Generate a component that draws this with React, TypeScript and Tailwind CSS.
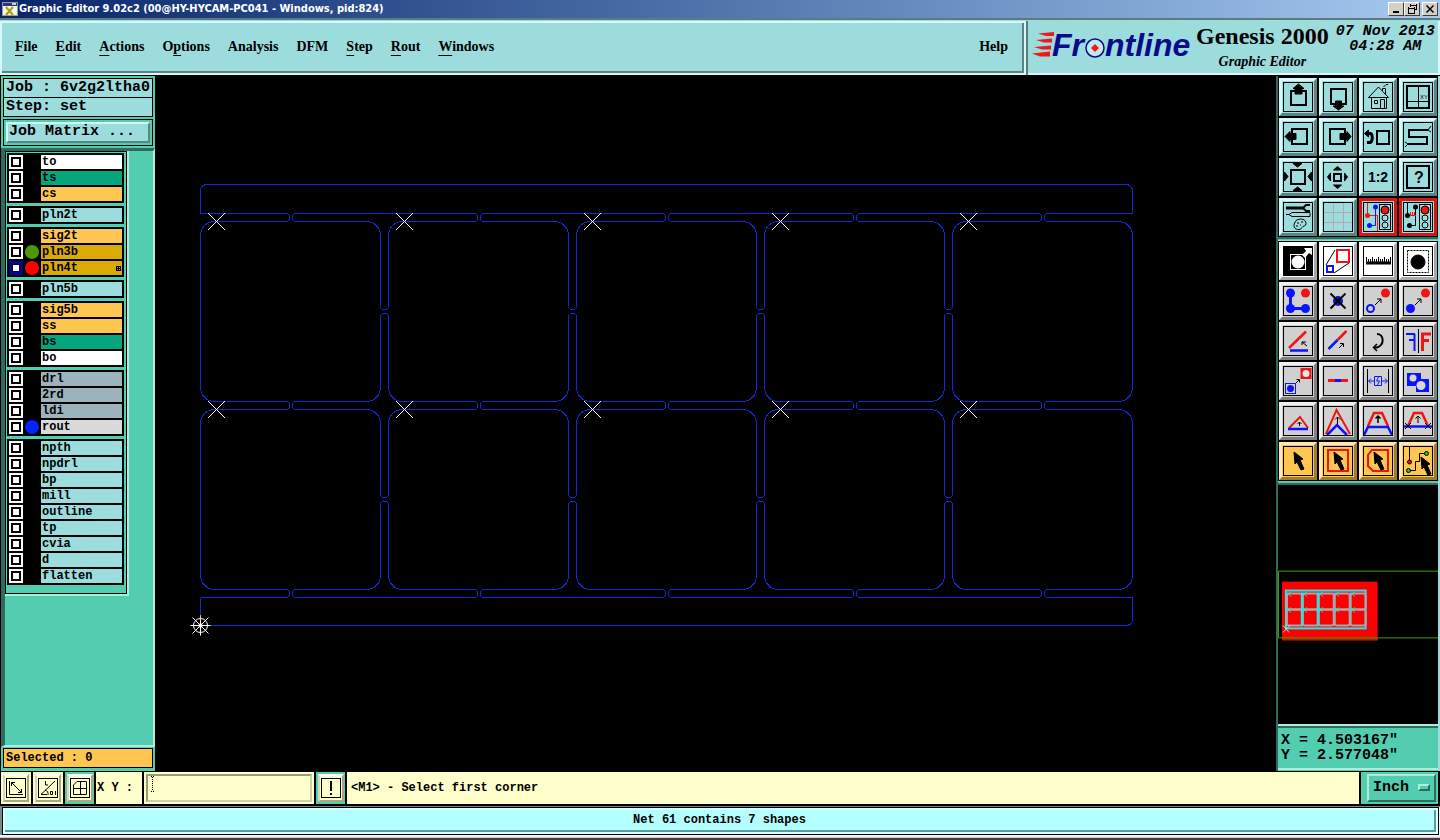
import type { ReactNode } from "react";

const MONO = "font-['Liberation_Mono',monospace]";
const SERIF = "font-['Liberation_Serif',serif]";

type Layer = { name: string; tone: string; dot?: string; active?: boolean; grid?: boolean };

const AQUA = "bg-[#9cdcdc]";
const GREEN = "bg-[#05a57d]";
const AMBER = "bg-[#ffc651]";
const GOLD = "bg-[#dbab05]";
const SLATE = "bg-[#9cb3bd]";

const layerGroups: Layer[][] = [
  [
    { name: "to", tone: "bg-white" },
    { name: "ts", tone: GREEN },
    { name: "cs", tone: AMBER },
  ],
  [{ name: "pln2t", tone: AQUA }],
  [
    { name: "sig2t", tone: AMBER },
    { name: "pln3b", tone: GOLD, dot: "bg-[#4d9905]" },
    { name: "pln4t", tone: GOLD, dot: "bg-[#ff0000]", active: true, grid: true },
  ],
  [{ name: "pln5b", tone: AQUA }],
  [
    { name: "sig5b", tone: AMBER },
    { name: "ss", tone: AMBER },
    { name: "bs", tone: GREEN },
    { name: "bo", tone: "bg-white" },
  ],
  [
    { name: "drl", tone: SLATE },
    { name: "2rd", tone: SLATE },
    { name: "ldi", tone: SLATE },
    { name: "rout", tone: "bg-[#dadada]", dot: "bg-[#0522ff]" },
  ],
  [
    { name: "npth", tone: AQUA },
    { name: "npdrl", tone: AQUA },
    { name: "bp", tone: AQUA },
    { name: "mill", tone: AQUA },
    { name: "outline", tone: AQUA },
    { name: "tp", tone: AQUA },
    { name: "cvia", tone: AQUA },
    { name: "d", tone: AQUA },
    { name: "flatten", tone: AQUA },
  ],
];

// [text before the mnemonic, mnemonic, rest]
const menus: [string, string, string][] = [
  ["", "F", "ile"],
  ["", "E", "dit"],
  ["", "A", "ctions"],
  ["O", "p", "tions"],
  ["Analysis", "", ""],
  ["DFM", "", ""],
  ["", "S", "tep"],
  ["", "R", "out"],
  ["", "W", "indows"],
];

function TitleBar() {
  const button =
    "flex h-[14px] w-4 items-center justify-center border border-t-white border-l-white border-r-[#404040] border-b-[#404040] bg-[#d4d0c8]";
  return (
    <div className="flex h-[18px] shrink-0 items-center bg-linear-to-r from-[#0a246a] to-[#a6caf0] pr-[2px] pl-[2px]">
      <svg width="16" height="14" viewBox="0 0 16 14" aria-hidden="true">
        <rect x=".5" y=".5" width="15" height="13" fill="#f4f4e8" stroke="#9a9a9a" />
        <rect x="1" y="1" width="14" height="3" fill="#223a80" />
        <rect x="10" y="1" width="4" height="2" fill="#d4d0c8" />
        <path d="M4 5l7 8M11 5l-7 8" stroke="#a8a010" strokeWidth="2" />
      </svg>
      <h1 className="ml-[1px] flex-1 font-['DejaVu_Sans_Condensed','DejaVu_Sans',sans-serif] text-[11px] font-bold whitespace-nowrap text-white">
        Graphic Editor 9.02c2 (00@HY-HYCAM-PC041 - Windows, pid:824)
      </h1>
      <button className={button} aria-label="Minimize">
        <svg width="12" height="12">
          <path d="M3 9h6" stroke="#000" strokeWidth="2" />
        </svg>
      </button>
      <button className={button} aria-label="Restore">
        <svg width="12" height="12" fill="none" stroke="#000" shapeRendering="crispEdges">
          <path d="M4 2h7M4.5 1v3M10.5 1v6M8 6.5h3M2 5h7M2.5 4v6M8.500 4v6M2 10.5h7" />
        </svg>
      </button>
      <button className={`${button} ml-[2px]`} aria-label="Close">
        <svg width="12" height="12">
          <path d="M2.5 2.5l7 7M9.5 2.5l-7 7" stroke="#000" strokeWidth="1.5" />
        </svg>
      </button>
    </div>
  );
}

function Logo() {
  return (
    <svg
      width="160"
      height="46"
      viewBox="0 -6 160 46"
      className="mt-[2px] shrink-0"
      role="img"
      aria-label="Frontline"
    >
      <g fill="#f01818">
        <path d="M6 4.500L22 3v4H14z" />
        <path d="M4 11L20 9.500v4h-8z" />
        <path d="M2 18L19 16.500v4h-9z" />
        <path d="M0 24.500L18 22.500v5H8z" />
      </g>
      <g
        fill="#0a0a8c"
        fontFamily="'Liberation Sans', sans-serif"
        fontSize="32"
        fontWeight="700"
        fontStyle="italic"
      >
        <text x="20" y="27">Fr</text>
        <text x="73" y="27">ntline</text>
      </g>
      <circle cx="63" cy="19" r="9" fill="#c4e8ea" stroke="#0a0a8c" strokeWidth="1.5" />
      <path d="M63 15l4 4-4 4-4-4z" fill="#f01818" />
    </svg>
  );
}

function MenuBar() {
  return (
    <header className={`flex h-[57px] shrink-0 border-t-2 border-[#5c7c7c] bg-[#9cdcdc] pt-[1px] ${SERIF}`}>
      <nav className="flex flex-1 border-2 border-[#d8f8f8]">
        <div className="flex flex-1 items-center gap-[18px] border-r-2 border-b-2 border-[#5c8484] pr-[14px] pb-[1px] pl-[13px] text-[14px] font-bold">
          {menus.map(([before, key, rest]) => (
            <button key={before + key + rest} className="leading-5">
              {before}
              {key && <span className="underline decoration-1 underline-offset-4">{key}</span>}
              {rest}
            </button>
          ))}
          <button className="ml-auto">Help</button>
        </div>
      </nav>
      <div className="flex w-[414px] shrink-0 border-l-2 border-[#5c7c7c]">
        <div className="flex flex-1 border-r-2 border-b-2 border-[#d8f8f8] pl-1">
          <Logo />
          <div className="flex flex-col items-center pl-1">
            <div className="text-[24px] leading-[30px] font-bold whitespace-nowrap">Genesis 2000</div>
            <div className="text-[14px] leading-[22px] font-bold whitespace-nowrap italic">Graphic Editor</div>
          </div>
          <div
            className={`flex-1 pt-[3px] pl-1 text-center text-[15px] leading-[15px] font-bold whitespace-nowrap italic ${MONO}`}
          >
            07 Nov 2013
            <br />
            04:28 AM
          </div>
        </div>
      </div>
    </header>
  );
}

function LayerRow({ layer }: { layer: Layer }) {
  return (
    <label className="flex h-[14px]">
      <input
        type="checkbox"
        className={
          layer.active
            ? "size-[14px] appearance-none border-[3px] border-[#05058c] bg-white shadow-[inset_0_0_0_1px_#000030]"
            : "size-[14px] appearance-none border-2 border-white bg-white shadow-[inset_0_0_0_2px_#000]"
        }
      />
      <span className="flex w-[18px] items-center justify-center">
        {layer.dot && <span className={`size-[14px] shrink-0 rounded-full ${layer.dot}`} />}
      </span>
      <span className={`flex flex-1 items-center justify-between px-[1px] leading-[14px] ${layer.tone}`}>
        {layer.name}
        {layer.grid && (
          <svg width="5" height="5" fill="none" stroke="#000" shapeRendering="crispEdges">
            <path d="M.5 .5h4v4h-4zM2.5 0v5M0 2.5h5" />
          </svg>
        )}
      </span>
    </label>
  );
}

function LayerPanel() {
  return (
    <aside className={`flex w-[156px] shrink-0 flex-col border-r border-l border-black bg-[#53cdb0] font-bold ${MONO}`}>
      <div className="p-[2px] text-[15px]">
        <div className="flex h-5 items-center border border-black bg-[#9cdcdc] pl-[2px]">Job : 6v2g2ltha0</div>
        <div className="-mt-px flex h-5 items-center border border-black bg-[#9cdcdc] pl-[2px]">Step: set</div>
        <div className="mt-[2px] border border-black p-[2px]">
          <button className="flex h-[21px] w-full items-center border-2 border-t-[#d0f8f8] border-r-[#5c8484] border-b-[#5c8484] border-l-[#d0f8f8] bg-[#9cdcdc] pl-[1px]">
            Job Matrix ...
          </button>
        </div>
      </div>
      <div className="flex flex-1 items-start border-t-3 border-r-2 border-b-2 border-l-4 border-t-[#2f6b5c] border-r-[#b0ecd8] border-b-[#b0ecd8] border-l-[#2f6b5c]">
        <div className="w-[124px] border-r-2 border-b-2 border-[#b0ecd8]">
          <div className="flex flex-col gap-[3px] border border-black pt-[1px] pr-[2px] pb-2 pl-[1px] text-[12px]">
            {layerGroups.map((group) => (
              <div key={group[0].name} className="flex flex-col gap-[2px] bg-black p-[2px]">
                {group.map((layer) => (
                  <LayerRow key={layer.name} layer={layer} />
                ))}
              </div>
            ))}
          </div>
        </div>
      </div>
      <div className="mx-[2px] mt-[1px] mb-[3px] flex h-5 items-center border border-black bg-[#ffc651] pl-[2px] text-[12px]">
        Selected : 0
      </div>
    </aside>
  );
}

const columns = [0, 1, 2, 3, 4];
const PITCH = 188;

// Rounded ends of a horizontal milled channel, either side of its tab
function tab(x: number, y: number) {
  return `M${x + 86} ${y}q3 0 3 4t-3 4M${x + 95} ${y}q-3 0 -3 4t3 4`;
}

function board(x: number, y: number) {
  return [
    `M${x + 86} ${y}H${x + 14}a14 14 0 0 0 -14 14V${y + 166}a14 14 0 0 0 14 14H${x + 86}`,
    `M${x + 95} ${y}H${x + 166}a14 14 0 0 1 14 14V${y + 166}a14 14 0 0 1 -14 14H${x + 95}`,
  ].join("");
}

// Edge of a panel rail, broken at every tab
function rail(y: number) {
  const breaks = columns.map((c) => `H${286 + c * PITCH}M${295 + c * PITCH} ${y}`).join("");
  return `M200 ${y}${breaks}H1132`;
}

function Workspace() {
  return (
    <main className="min-h-0 min-w-0 flex-1 bg-black">
      <svg
        className="block h-full w-full"
        viewBox="156 76 1120 695"
        preserveAspectRatio="xMinYMin meet"
        fill="none"
        role="img"
        aria-label="Panel outline"
      >
        <g stroke="#1428d8" transform="translate(.5 .5)" shapeRendering="crispEdges">
          <path d="M200 213V191q0 -7 7 -7H1125q7 0 7 7V213" />
          <path d="M200 597V625H1125q7 0 7 -7V597" />
          <path d={rail(213) + rail(597)} />
          <path d={columns.map((c) => board(200 + c * PITCH, 221) + board(200 + c * PITCH, 409)).join("")} />
          <path d={columns.map((c) => [213, 401, 589].map((y) => tab(200 + c * PITCH, y)).join("")).join("")} />
        </g>
        {/* tabs between neighbouring boards */}
        {columns.slice(0, 4).map((c) =>
          [311, 499].map((y) => (
            <g key={`${c}-${y}`} transform={`translate(${384.5 + c * PITCH} ${y + 0.5})`}>
              <rect x="-5" y="-5" width="10" height="10" fill="#000" />
              <path
                d="M-4 -5q0 3 4 3t4 -3M-4 5q0 -3 4 -3t4 3"
                stroke="#1428d8"
                shapeRendering="crispEdges"
              />
            </g>
          )),
        )}
        <path
          stroke="#fff"
          shapeRendering="crispEdges"
          d={columns
            .map((c) =>
              [221, 409].map((y) => `M${208 + c * PITCH} ${y - 8}l17 17m0 -17l-17 17`).join(""),
            )
            .join("")}
        />
        <g stroke="#fff" transform="translate(200.5 625.5)">
          <circle r="7" />
          <path d="M-10 0H10M0 -10V10M-8 -8L8 8M8 -8L-8 8" />
          <path d="M0 -10V-5" stroke="#ffd040" />
          <path d="M-2 0h4M0 -2v4" strokeWidth="2" />
        </g>
      </svg>
    </main>
  );
}

const tones = {
  aqua: "border-t-[#d4fafa] border-l-[#d4fafa] border-r-[#5c8484] border-b-[#5c8484] bg-[#9cdcdc]",
  red: "border-[#d81414] bg-[#9cdcdc]",
  white: "border-t-white border-l-white border-r-[#a8a8a8] border-b-[#a8a8a8] bg-white",
  grey: "border-t-[#f0f0f0] border-l-[#f0f0f0] border-r-[#808080] border-b-[#808080] bg-[#d0d0d0]",
  amber: "border-t-[#ffe8b8] border-l-[#ffe8b8] border-r-[#a07c30] border-b-[#a07c30] bg-[#ffc651]",
};

type Tool = { label: string; tone: keyof typeof tones; icon: ReactNode };

function ToolButton({ label, tone, icon }: Tool) {
  return (
    <button aria-label={label} className={`size-[38px] border-3 p-[1px] ${tones[tone]}`}>
      <svg width="30" height="30" viewBox="0 0 30 30" fill="none" stroke="#000" className="block">
        {icon}
        <rect x=".5" y=".5" width="29" height="29" />
      </svg>
    </button>
  );
}

const BLUE = "#0a14ff";
const RED = "#f01414";

const smallArrow = <path d="M12 19l6 -6M14 13h4v4" />;
const cursor = <path d="M11 6l9 7-3 1 4 9-3 1-4-8-2 2z" fill="#000" />;

function Trace({ node, line }: { node: string; line: string }) {
  return (
    <>
      <path d="M12.5 5v18.5h-6" stroke={line} />
      <circle cx="12.5" cy="5" r="2.5" fill={line} stroke="none" />
      <circle cx="6.5" cy="23.5" r="2.5" fill={line} stroke="none" />
      <path d="M4.5 1v12.5" stroke={node} />
      <circle cx="4.5" cy="13.5" r="2.5" fill={node} stroke="none" />
      <rect x="16.5" y="2.5" width="11" height="25" />
      <circle cx="22" cy="8" r="4" fill={RED} />
      <circle cx="22" cy="16" r="3" />
      <circle cx="22" cy="23" r="3" />
    </>
  );
}

const viewTools: Tool[] = [
  {
    label: "Pan up",
    tone: "aqua",
    icon: (
      <>
        <rect x="8" y="9" width="15" height="14" strokeWidth="2" />
        <path d="M15.5 2L21 6.5h-2V12h-7V6.5h-2z" fill="#000" />
      </>
    ),
  },
  {
    label: "Pan down",
    tone: "aqua",
    icon: (
      <>
        <rect x="8" y="7" width="15" height="15" strokeWidth="2" />
        <path d="M15.5 28L10 24h2.5v-5h6v5H21z" fill="#000" />
      </>
    ),
  },
  {
    label: "Home",
    tone: "aqua",
    icon: (
      <>
        <path d="M5.5 15.5L15.5 5l10 10.5zM8.5 16v10.5h15V16" />
        <path d="M19.5 9V6.500h3V12M20.5 4.5l2-1M23 2.500h2" />
        <path d="M11.5 18.5h3v3h-3zM17.5 26v-8.500h4V26" />
      </>
    ),
  },
  {
    label: "Zoom to coordinates",
    tone: "aqua",
    icon: (
      <>
        <rect x="4" y="4" width="22" height="22" strokeWidth="2" />
        <path d="M15.5 4v22M4 19.5h22" />
        <text x="17" y="17" fontSize="6" fill="#000" stroke="none" fontFamily="'Liberation Sans', sans-serif">
          XY
        </text>
      </>
    ),
  },
  {
    label: "Pan left",
    tone: "aqua",
    icon: (
      <>
        <rect x="9" y="7" width="15" height="15" strokeWidth="2" />
        <path d="M2 14.5l5-5v2h6v6H7v2z" fill="#000" />
      </>
    ),
  },
  {
    label: "Pan right",
    tone: "aqua",
    icon: (
      <>
        <rect x="7" y="7" width="15" height="15" strokeWidth="2" />
        <path d="M28 14.5l-4-5v2h-7v6h7v2z" fill="#000" />
      </>
    ),
  },
  {
    label: "Previous view",
    tone: "aqua",
    icon: (
      <>
        <rect x="14" y="9" width="12" height="13" strokeWidth="2" />
        <path d="M5 11.5h2c3 0 3 8 0 9H4" strokeWidth="3" />
        <path d="M1.5 11.5l4-3.5v7z" fill="#000" />
      </>
    ),
  },
  {
    label: "Serpentine",
    tone: "aqua",
    icon: (
      <>
        <path d="M25 8H6v7h18v7H5" strokeWidth="2" />
        <path d="M25 8l3-4M25 8l3 2M5 22l-3-2M5 22l-3 3" />
      </>
    ),
  },
  {
    label: "Zoom in",
    tone: "aqua",
    icon: (
      <>
        <rect x="8" y="8" width="14" height="14" strokeWidth="2" />
        <path d="M10 1.5h9L14.5 5zM10 28.5h9L14.5 25zM1.5 10v9l3.500-4.500zM28.5 10v9L25 14.5z" fill="#000" />
      </>
    ),
  },
  {
    label: "Zoom out",
    tone: "aqua",
    icon: (
      <>
        <rect x="11" y="12" width="7" height="7" strokeWidth="2" />
        <path d="M10.5 8h8l-4-3.500zM10.5 23h8l-4 3.500zM7.5 11v8l-3-4zM21.5 11v8l3-4z" fill="#000" />
      </>
    ),
  },
  {
    label: "Scale 1:2",
    tone: "aqua",
    icon: (
      <text
        x="15"
        y="20"
        fontSize="14"
        fontWeight="700"
        textAnchor="middle"
        fill="#000"
        stroke="none"
        fontFamily="'Liberation Sans', sans-serif"
      >
        1:2
      </text>
    ),
  },
  {
    label: "Query",
    tone: "aqua",
    icon: (
      <>
        <rect x="4" y="4" width="22" height="22" strokeWidth="2" />
        <text
          x="16"
          y="21"
          fontSize="16"
          fontWeight="700"
          textAnchor="middle"
          fill="#000"
          stroke="none"
          fontFamily="'Liberation Sans', sans-serif"
        >
          ?
        </text>
      </>
    ),
  },
  {
    label: "Preferences",
    tone: "aqua",
    icon: (
      <>
        <path d="M3 6h17" strokeWidth="3" />
        <path d="M27 3h-4l-3 3 3 3h4" strokeWidth="2" />
        <path d="M3 12.5h3l3-2h18v4H9l-3-2" />
        <path d="M13 18.5c5-3 10-1 10 3 0 3-3 2-4 4-1 3-8 3-8-2 0-2 1-3 2-5zM14 21h2M18 20h2M13 24h2M17 23h1" />
      </>
    ),
  },
  {
    label: "Grid",
    tone: "aqua",
    icon: <path d="M10.5 1v28M20.5 1v28M1 10.5h28M1 20.5h28" stroke="#b8a8a8" />,
  },
  {
    label: "Net display",
    tone: "red",
    icon: (
      <>
        <path d="M4 13.500h10.500V29" stroke={RED} />
        <Trace node={RED} line={BLUE} />
      </>
    ),
  },
  {
    label: "Net check",
    tone: "red",
    icon: (
      <>
        <Trace node="#000" line="#000" />
        <path d="M7 13.500h6M7.5 10v4M9.5 10v4M11.5 10v4" stroke={RED} />
      </>
    ),
  },
];

const editTools: Tool[] = [
  {
    label: "Snap view",
    tone: "white",
    icon: (
      <>
        <rect width="30" height="30" fill="#000" />
        <rect x="7.5" y="8.5" width="15" height="15" stroke="#fff" />
        <circle cx="15" cy="16" r="6.5" fill="#fff" stroke="none" />
        <path d="M19 9l4-4-2-3h8v7l-3-2-4 5z" fill="#fff" stroke="none" />
      </>
    ),
  },
  {
    label: "Scale features",
    tone: "white",
    icon: (
      <>
        <path d="M3 19l9-15M11 27l15-10" />
        <rect x="14" y="4" width="12" height="12" stroke={RED} strokeWidth="2" />
        <rect x="4" y="20" width="6" height="6" stroke={BLUE} strokeWidth="2" />
      </>
    ),
  },
  {
    label: "Measure",
    tone: "white",
    icon: (
      <>
        <path d="M3 17h25" strokeWidth="3" />
        <path d="M3.5 11v7M5.5 13v5M7.5 13v5M9.500 11v7M11.5 13v5M13.500 13v5M15.5 11v7M17.500 13v5M19.500 13v5M21.5 11v7M23.500 13v5M25.500 13v5M27.5 11v7" />
      </>
    ),
  },
  {
    label: "Select pad",
    tone: "white",
    icon: (
      <>
        <rect x="4.5" y="4.5" width="21" height="22" strokeDasharray="2 1" />
        <circle cx="15" cy="16" r="7" fill="#000" />
      </>
    ),
  },
  {
    label: "Add polyline",
    tone: "grey",
    icon: (
      <>
        <path d="M7.5 7v15.500h15" stroke={BLUE} strokeWidth="3" />
        <g fill={BLUE} stroke="none">
          <circle cx="7.5" cy="7" r="4.5" />
          <circle cx="7.5" cy="22.5" r="4.5" />
          <circle cx="22.5" cy="22.5" r="4.5" />
          <circle cx="22.5" cy="7" r="4.5" fill={RED} />
        </g>
      </>
    ),
  },
  {
    label: "Delete",
    tone: "grey",
    icon: (
      <>
        <circle cx="15" cy="15" r="5" fill="#0a14c8" stroke="none" />
        <path d="M7.5 7.5l15 15M22.5 7.5l-15 15" strokeWidth="2" />
      </>
    ),
  },
  {
    label: "Copy",
    tone: "grey",
    icon: (
      <>
        <circle cx="22.5" cy="7" r="4.5" fill={RED} stroke="none" />
        <circle cx="7.5" cy="22.5" r="3.5" stroke={BLUE} strokeWidth="2" />
        {smallArrow}
      </>
    ),
  },
  {
    label: "Move",
    tone: "grey",
    icon: (
      <>
        <circle cx="22.5" cy="7" r="4.5" fill={RED} stroke="none" />
        <circle cx="7.5" cy="22.5" r="4.5" fill={BLUE} stroke="none" />
        {smallArrow}
      </>
    ),
  },
  {
    label: "Rotate line",
    tone: "grey",
    icon: (
      <>
        <path d="M6 22L23 5.500" stroke={RED} strokeWidth="2.5" />
        <path d="M7 24.500h18" stroke={BLUE} strokeWidth="2.5" />
        <path d="M24 20l-5-4M19 19v-3h4" />
      </>
    ),
  },
  {
    label: "Extend line",
    tone: "grey",
    icon: (
      <>
        <path d="M14.5 14l9-9" stroke={RED} strokeWidth="2.5" />
        <path d="M5.5 23l9-9" stroke={BLUE} strokeWidth="2.5" />
        <path d="M16 22l4-4M17 17.500h3.500v3.500" />
      </>
    ),
  },
  {
    label: "Rotate",
    tone: "grey",
    icon: (
      <>
        <path d="M14 8c7 0 8 11 0 13.500h-3" strokeWidth="2" />
        <path d="M14 18l-3.500 3.500L14 25" strokeWidth="1.5" />
      </>
    ),
  },
  {
    label: "Mirror",
    tone: "grey",
    icon: (
      <>
        <path d="M15.5 3v24" />
        <path d="M3 8h9M6 14h6M11.5 8v17" stroke={BLUE} strokeWidth="2" />
        <path d="M28 8h-8M26 14.500h-6M19.500 6.500v18.500" stroke={RED} strokeWidth="3" />
      </>
    ),
  },
  {
    label: "Resize",
    tone: "grey",
    icon: (
      <>
        <rect x="17.5" y="2" width="11" height="11" fill={RED} stroke="none" />
        <circle cx="23" cy="7.5" r="3.5" fill="#e8e8e8" stroke="none" />
        <rect x="2.5" y="17.5" width="10" height="10" stroke={BLUE} />
        <circle cx="7.5" cy="22.5" r="3.5" fill={BLUE} stroke="none" />
        <path d="M13 17l3-3M13.5 13.500h3v3" />
      </>
    ),
  },
  {
    label: "Break line",
    tone: "grey",
    icon: (
      <>
        <path d="M5 14.500h20" stroke={RED} strokeWidth="3" />
        <path d="M12 14.500h6" stroke={BLUE} strokeWidth="3" />
      </>
    ),
  },
  {
    label: "Spacing",
    tone: "grey",
    icon: (
      <>
        <path d="M4.5 3v24M25.5 3v24" />
        <g stroke={BLUE}>
          <path d="M11.5 10.500h7v9h-7zM15.5 11l-2 4h3l-2 4" />
          <path d="M11 15H6M8 12.500L5.5 15 8 17.500M19 15h5M22 12.500l2.500 2.500-2.500 2.500" />
        </g>
      </>
    ),
  },
  {
    label: "Surface",
    tone: "grey",
    icon: (
      <>
        <path d="M4 7h14v6h8v13H13v-6H4z" fill={BLUE} stroke="none" />
        <circle cx="10" cy="12" r="3.5" fill="#d8d8d8" stroke="none" />
        <circle cx="18" cy="19.5" r="4.5" fill="#d8d8d8" stroke="none" />
      </>
    ),
  },
  {
    label: "Stretch corner",
    tone: "grey",
    icon: (
      <>
        <path d="M6 22l11-11 8 11" stroke={RED} strokeWidth="2" />
        <path d="M5 23h20" stroke={BLUE} strokeWidth="2.5" />
        <path d="M16.5 20v-4M14.5 18l2-2 2 2" />
      </>
    ),
  },
  {
    label: "Stretch parallel",
    tone: "grey",
    icon: (
      <>
        <path d="M3 28L13.5 4 27 28" stroke={RED} strokeWidth="2" />
        <path d="M4 29l10-10 10 10" stroke={BLUE} strokeWidth="2.5" />
        <path d="M14.5 18v-7M12 13.500l2.500-2.500 2.500 2.500" />
      </>
    ),
  },
  {
    label: "Move segment",
    tone: "grey",
    icon: (
      <>
        <path d="M5 20l6-13h8l6 13" stroke={RED} strokeWidth="2.5" />
        <path d="M1 29l4-8h20l4 8" stroke={BLUE} strokeWidth="2.5" />
        <path d="M15 17v-7M12.5 12.500L15 10l2.500 2.500" strokeWidth="1.5" />
      </>
    ),
  },
  {
    label: "Move segment free",
    tone: "grey",
    icon: (
      <>
        <path d="M5 20l6-13h8l6 13" stroke={RED} strokeWidth="2.5" />
        <path d="M1 20.500h28" stroke={BLUE} strokeWidth="2.5" />
        <path d="M15 17v-7M12.5 12.500L15 10l2.500 2.500M2 17l6 6M8 17l-6 6M22 17l6 6M28 17l-6 6" />
      </>
    ),
  },
  { label: "Select", tone: "amber", icon: cursor },
  {
    label: "Select in frame",
    tone: "amber",
    icon: (
      <>
        <rect x="5" y="4" width="20" height="21" stroke={RED} strokeWidth="2" />
        {cursor}
      </>
    ),
  },
  {
    label: "Select in polygon",
    tone: "amber",
    icon: (
      <>
        <path d="M9 4h16v21H10l-5-5V9z" stroke={RED} strokeWidth="2" />
        {cursor}
      </>
    ),
  },
  {
    label: "Select net",
    tone: "amber",
    icon: (
      <>
        <path d="M6.5 1v15M5.5 24.500h7v-9h4v-8h7" />
        <circle cx="6.5" cy="16" r="2" fill={RED} />
        <circle cx="5.5" cy="24.5" r="2" fill="#20d020" />
        <circle cx="23.5" cy="7.5" r="2" fill="#20d020" />
        <g transform="translate(7 5)">{cursor}</g>
      </>
    ),
  },
];

const overviewColumns = [1286, 1302, 1318, 1334, 1350];

function Overview() {
  return (
    <div className="min-h-0 flex-1 border-b-2 border-[#b0ecd8] bg-black">
      <svg
        className="block h-full w-full"
        viewBox="1278 485 160 240"
        preserveAspectRatio="xMinYMid meet"
        fill="none"
        role="img"
        aria-label="Overview"
      >
        <rect x="1282" y="582" width="96" height="59" fill="#ff0000" />
        <path d="M1282 640h96" stroke="#a02800" strokeWidth="2" />
        <path d="M1440 571.500H1278.500v67H1440" stroke="#4d9905" />
        <rect x="1286" y="591" width="80" height="38" stroke="#20e8f0" strokeWidth="2" />
        {overviewColumns.map((x) => (
          <g key={x} stroke="#a8a8a8" strokeWidth="2">
            <rect x={x + 1} y="594" width="15" height="16" rx="2" />
            <rect x={x + 1} y="610" width="15" height="16" rx="2" />
          </g>
        ))}
        <path d="M1302 593v34M1318 593v34" stroke="#20e8f0" strokeWidth="2" />
        <path
          d={overviewColumns.map((x) => [594, 610].map((y) => `M${x} ${y - 2}l5 5m0 -5l-5 5`).join("")).join("")}
          stroke="#20e8f0"
        />
        <path d="M1283 626l6 7M1290 626l-7 7" stroke="#90e8e8" />
      </svg>
    </div>
  );
}

function ToolPanel() {
  return (
    <aside className="flex w-[164px] shrink-0 flex-col border-r-2 border-l-2 border-r-[#9cdcdc] border-l-[#2f6b5c] bg-[#53cdb0]">
      <div className="grid grid-cols-4 gap-[2px] border-b-2 border-[#2f6b5c] bg-black px-[1px] pt-[2px] pb-[1px]">
        {viewTools.map((tool) => (
          <ToolButton key={tool.label} {...tool} />
        ))}
      </div>
      <div className="mt-[1px] grid grid-cols-4 gap-[2px] border-t border-[#9cdcdc] bg-black px-[1px] pt-[1px] pb-[1px]">
        {editTools.map((tool) => (
          <ToolButton key={tool.label} {...tool} />
        ))}
      </div>
      <div className="h-1 shrink-0 border-b-2 border-[#2f6b5c]" />
      <Overview />
      <div
        className={`mb-[1px] h-11 shrink-0 border-t-2 border-b-2 border-t-[#2f6b5c] border-b-[#b0ecd8] pt-[5px] pl-[3px] text-[15px] leading-[15px] font-bold whitespace-pre ${MONO}`}
      >
        {'X = 4.503167"\nY = 2.577048"'}
      </div>
    </aside>
  );
}

function CommandButton({ label, framed, icon }: { label: string; framed?: boolean; icon: ReactNode }) {
  return (
    <div
      className={`flex h-8 items-center justify-center ${framed ? "w-[29px] bg-[#53cdb0]" : "w-[30px] bg-[#ffffcc]"}`}
    >
      <button
        aria-label={label}
        className="flex h-7 w-[26px] items-center justify-center border-2 border-t-[#fffff0] border-r-[#a8a880] border-b-[#a8a880] border-l-[#d8d8b0] bg-[#ffffcc]"
      >
        <svg width="20" height="20" viewBox="0 0 20 20" fill="none" stroke="#000">
          <rect x=".5" y=".5" width="19" height="19" />
          {icon}
        </svg>
      </button>
    </div>
  );
}

function CommandBar() {
  return (
    <div className={`flex h-[35px] shrink-0 gap-[2px] bg-black pt-[1px] pr-[2px] pb-[2px] pl-[1px] text-[12px] font-bold ${MONO}`}>
      <CommandButton
        label="Absolute"
        icon={<path d="M3.5 3v13.500H17M5.5 4.500l10 10M5.5 8V4.500H9M12 14.500h3.500V11" />}
      />
      <CommandButton
        label="Angle"
        icon={
          <>
            <path d="M17 3L3 16.500h6M7.5 3v4H10" />
            <path d="M7 12a4 4 0 0 1 3 5M12.5 13.500h2v3h-2zM17.5 13v4" />
          </>
        }
      />
      <CommandButton
        framed
        label="Snap grid"
        icon={<path d="M7 3.500h9.500v13h-13V7zM10.500 3.500v13M3.500 10.500h13" />}
      />
      <label htmlFor="xy" className="flex w-[46px] items-center bg-[#ffffcc] pl-[1px] whitespace-nowrap">
        X Y :
      </label>
      <div className="flex w-[170px] items-center bg-[#ffffcc] p-[2px]">
        <div className="flex h-full w-full items-start border-2 border-t-[#98987c] border-r-[#d0d0a8] border-b-[#d0d0a8] border-l-[#98987c] pl-[2px]">
          <svg width="5" height="16" stroke="#000" aria-hidden="true">
            <path d="M2.500 1v14" strokeDasharray="1 1" />
            <path d="M1 .5h1M3 .5h1M1 15.500h1M3 15.500h1" />
          </svg>
          <input id="xy" type="text" className="min-w-0 flex-1 bg-transparent outline-none" />
        </div>
      </div>
      <CommandButton framed label="Interrupt" icon={<path d="M10 3v10M10 15v2" strokeWidth="2" />} />
      <div className="flex flex-1 items-center bg-[#ffffcc] pl-1 whitespace-pre">{"<M1> - Select first corner"}</div>
      <div className="flex w-[77px] bg-[#53cdb0] p-[2px] pl-[6px]">
        <div className="relative flex flex-1 border-2 border-t-[#b0ecd8] border-r-[#2f6b5c] border-b-[#2f6b5c] border-l-[#b0ecd8]">
          <select aria-label="Units" className="w-full appearance-none bg-transparent pl-1 text-[15px] font-bold">
            <option>Inch</option>
            <option>mm</option>
          </select>
          <span className="pointer-events-none absolute top-2 right-1 h-[7px] w-3 border-2 border-t-[#b0ecd8] border-r-[#2f6b5c] border-b-[#2f6b5c] border-l-[#b0ecd8]" />
        </div>
      </div>
    </div>
  );
}

function StatusBar() {
  return (
    <footer className="h-[34px] shrink-0 border-b-2 border-[#404040] bg-[#6b8f90]">
      <div className="flex h-8 border-b border-[#d4d0c8] bg-[#f0f4f4] pb-[2px]">
        <div className="flex flex-1 border-t border-l-2 border-[#6b8f90] pr-[1px]">
          <div className="flex flex-1 border border-black bg-[#dcffff] p-[2px]">
            <p
              className={`flex flex-1 items-center justify-center border-r-2 border-b-2 border-[#5c9c9c] bg-[#b3ffff] text-[12px] font-bold ${MONO}`}
            >
              Net 61 contains 7 shapes
            </p>
          </div>
        </div>
      </div>
    </footer>
  );
}

export default function App() {
  return (
    <div className="flex h-screen flex-col overflow-hidden bg-black text-black">
      <TitleBar />
      <MenuBar />
      <div className="flex min-h-0 flex-1 pt-[1px]">
        <LayerPanel />
        <Workspace />
        <ToolPanel />
      </div>
      <CommandBar />
      <StatusBar />
    </div>
  );
}
